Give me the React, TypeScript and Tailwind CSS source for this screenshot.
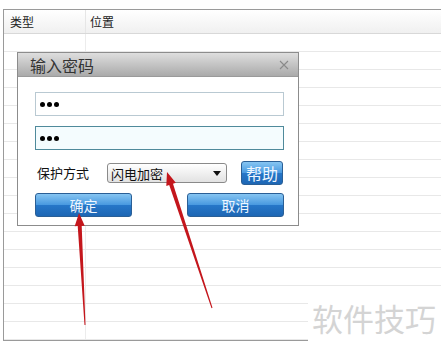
import React from "react";

const font = { fontFamily: '"Noto Sans CJK SC", "Noto Sans", sans-serif' };

function arrowPoints(tx: number, ty: number, sx: number, sy: number) {
  const dx = tx - sx;
  const dy = ty - sy;
  const len = Math.hypot(dx, dy);
  const ux = dx / len;
  const uy = dy / len;
  const nx = -uy;
  const ny = ux;
  const h = 13;
  const bx = tx - ux * h;
  const by = ty - uy * h;
  const pts: [number, number][] = [
    [sx + nx * 0.5, sy + ny * 0.5],
    [bx + nx * 2, by + ny * 2],
    [bx + nx * 5, by + ny * 5],
    [tx, ty],
    [bx - nx * 5, by - ny * 5],
    [bx - nx * 2, by - ny * 2],
    [sx - nx * 0.5, sy - ny * 0.5],
  ];
  return pts.map((p) => p.map((v) => v.toFixed(1)).join(",")).join(" ");
}

function Dots() {
  return (
    <div className="flex items-center gap-[2px] pl-[4px]">
      <span className="w-[5px] h-[5px] rounded-full bg-black" />
      <span className="w-[5px] h-[5px] rounded-full bg-black" />
      <span className="w-[5px] h-[5px] rounded-full bg-black" />
    </div>
  );
}

const blueBtn =
  "flex items-center justify-center rounded-[3px] border border-[#2a5f96] bg-[linear-gradient(to_bottom,#86c5f2,#4a9ae0_48%,#2676c8_52%,#1d66b4)] text-[#eef6ff]";

export default function App() {
  const rows = Array.from({ length: 17 });
  return (
    <div className="relative w-[441px] h-[352px] bg-white overflow-hidden" style={font}>
      <div className="pt-[9px] pl-[3px]">
        <div className="w-[460px] h-[332px] border-l border-t border-b border-[#9a9a9a] flex flex-col">
          <div className="h-[24px] flex border-b border-[#d8d8d8] bg-[linear-gradient(to_bottom,#ffffff,#f0f0f0)] text-[12px] text-[#222]">
            <div className="w-[82px] border-r border-[#e6e6e6] pl-[6px] flex items-center">类型</div>
            <div className="pl-[4px] flex items-center">位置</div>
          </div>
          {rows.map((_, i) => (
            <div key={i} className="h-[18px] flex border-b border-[#e8e8e8]">
              <div className="w-[82px] border-r border-[#ececec]" />
              <div />
            </div>
          ))}
        </div>
      </div>

      {/* Dialog */}
      <div className="absolute left-[17px] top-[52px] w-[282px] h-[174px] border border-[#8c8c8c] bg-white flex flex-col">
        <div className="h-[24px] flex items-center justify-between pl-[12px] pr-[9px] bg-[linear-gradient(to_bottom,#dedede,#aaaaaa)] border-b border-[#9a9a9a]">
          <span className="text-[16px] text-[#333] leading-none">输入密码</span>
          <svg width="10" height="10" viewBox="0 0 10 10">
            <path d="M1 1L9 9M9 1L1 9" stroke="#8a8a8a" strokeWidth="1.1" />
          </svg>
        </div>
        <div className="flex flex-col pl-[17px] pr-[14px] pt-[15px]">
          <div className="h-[24px] border border-[#b9c9d2] bg-white flex items-center">
            <Dots />
          </div>
          <div className="h-[24px] mt-[10px] border border-[#4f8a9b] bg-[#f4fcfe] flex items-center">
            <Dots />
          </div>
          <div className="h-[24px] mt-[11px] flex items-center">
            <div className="w-[72px] pl-[2px] text-[13px] text-[#111]">保护方式</div>
            <div className="w-[120px] h-[20px] rounded-[3px] border border-[#8a8a8a] bg-[linear-gradient(to_bottom,#ffffff,#e2e2e2)] flex items-center justify-between pl-[3px] pr-[5px]">
              <span className="text-[13px] text-[#111] leading-none">闪电加密</span>
              <svg width="8" height="5" viewBox="0 0 8 5">
                <path d="M0 0H8L4 5Z" fill="#111" />
              </svg>
            </div>
            <div className={`${blueBtn} ml-[14px] w-[42px] h-[24px] text-[16px] leading-none`}>帮助</div>
          </div>
          <div className="mt-[8px] flex justify-between">
            <div className={`${blueBtn} w-[97px] h-[24px] text-[14px] leading-none`}>确定</div>
            <div className={`${blueBtn} w-[97px] h-[24px] text-[14px] leading-none`}>取消</div>
          </div>
        </div>
      </div>

      {/* Watermark */}
      <div className="absolute left-[308px] top-[295px] w-[133px] h-[57px] bg-white flex items-start pl-[4px] pt-[1px]">
        <span className="text-[31px] leading-[44px] text-[#d4d4d4] tracking-[0px]">软件技巧</span>
      </div>

      {/* Arrows */}
      <svg className="absolute left-0 top-0" width="441" height="352" viewBox="0 0 441 352">
        <polygon points={arrowPoints(79, 213, 85, 325)} fill="#c4161c" />
        <polygon points={arrowPoints(167, 172, 212, 308)} fill="#c4161c" />
      </svg>
    </div>
  );
}
